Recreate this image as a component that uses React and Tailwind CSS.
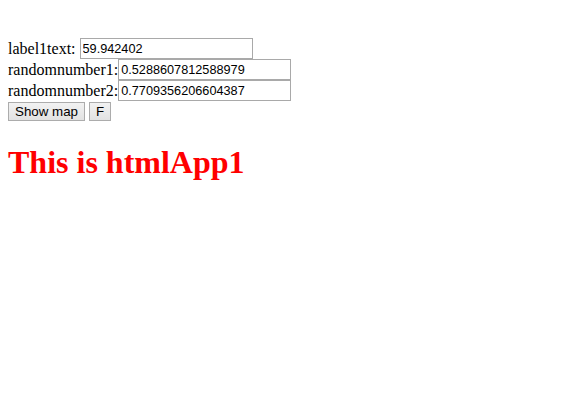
import React from 'react';

const inputCls =
  "h-[21px] w-[173px] border border-[#a9a9a9] bg-white px-[2px] text-[12.7px] text-black outline-none font-['Liberation_Sans',Arial,sans-serif]";

const btnCls =
  "h-[19px] border border-[#acacac] bg-linear-to-b from-[#f2f2f2] to-[#e2e2e2] px-[6px] text-[13.33px] leading-none text-black font-['Liberation_Sans',Arial,sans-serif]";

const App = () => {
  return (
    <div className="min-h-[414px] bg-white px-2 pt-[38px] font-['Liberation_Serif','Times_New_Roman',serif] text-base text-black">
      {/* Поля */}
      <div className="flex h-[21px] items-center">
        <span className="mr-[4px]">label1text:</span>
        <input className={inputCls} defaultValue="59.942402" />
      </div>
      <div className="flex h-[21px] items-center">
        <span>randomnumber1:</span>
        <input className={inputCls} defaultValue="0.5288607812588979" />
      </div>
      <div className="flex h-[21px] items-center">
        <span>randomnumber2:</span>
        <input className={inputCls} defaultValue="0.7709356206604387" />
      </div>

      {/* Кнопки */}
      <div className="mt-px flex h-[21px] items-start gap-[4px]">
        <button type="button" className={btnCls}>Show map</button>
        <button type="button" className={btnCls}>F</button>
      </div>

      <h1 className="mt-[21px] text-[32px] font-bold leading-[37px] text-[#ff0000]">
        This is htmlApp1
      </h1>
    </div>
  );
};

export default App;
